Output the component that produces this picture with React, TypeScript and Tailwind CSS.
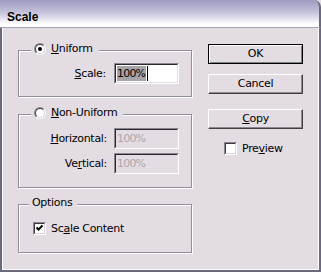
import React from 'react';

const Radio = ({ checked }: { checked?: boolean }) => (
  <div className="w-[12px] h-[12px] rounded-full border border-t-[#8a8790] border-l-[#8a8790] border-b-white border-r-white">
    <div className="w-full h-full rounded-full border border-t-[#3c3a40] border-l-[#3c3a40] border-b-[#d8d2d8] border-r-[#d8d2d8] bg-white flex items-center justify-center">
      {checked && <div className="w-[4px] h-[4px] rounded-full bg-black" />}
    </div>
  </div>
);

const Checkbox = ({ checked }: { checked?: boolean }) => (
  <div className="w-[13px] h-[13px] border border-t-[#8a8790] border-l-[#8a8790] border-b-white border-r-white">
    <div className="w-full h-full border border-t-[#3c3a40] border-l-[#3c3a40] border-b-[#d8d2d8] border-r-[#d8d2d8] bg-white">
      {checked && (
        <svg width="9" height="9" viewBox="0 0 9 9" className="block">
          <path d="M1.5 3.5 L3.5 5.5 L7.5 1.5" stroke="#000" strokeWidth="2" fill="none" />
        </svg>
      )}
    </div>
  </div>
);

const Field = ({ disabled, selected }: { disabled?: boolean; selected?: boolean }) => (
  <div className="w-[65px] h-[21px] border border-t-[#8a8790] border-l-[#8a8790] border-b-white border-r-white">
    <div
      className={`w-full h-full border border-t-[#2a282e] border-l-[#2a282e] border-b-[#e3dde3] border-r-[#e3dde3] flex items-center pl-[1px] ${
        disabled ? 'bg-[#e3dde3] text-[#a9a5ab]' : 'bg-white text-black'
      }`}
    >
      {selected ? (
        <>
          <span className="bg-[#a6a4a8] leading-[15px] tracking-[-0.8px] pr-[1px]">100%</span>
          <span className="w-[1px] h-[15px] bg-black ml-[1px]" />
        </>
      ) : (
        <span className="leading-[15px] tracking-[-0.8px]">100%</span>
      )}
    </div>
  </div>
);

const Group = ({
  legend,
  legendLeft,
  className,
  children,
}: {
  legend: React.ReactNode;
  legendLeft: string;
  className: string;
  children?: React.ReactNode;
}) => (
  <div
    className={`relative w-[174px] border border-[#918d99] shadow-[inset_1px_1px_0_#ffffff,1px_1px_0_#ffffff] ${className}`}
  >
    <div className={`absolute top-[-8px] ${legendLeft} h-[12px] flex items-center bg-[#e3dde3]`}>{legend}</div>
    {children}
  </div>
);

const Button = ({ children, isDefault }: { children: React.ReactNode; isDefault?: boolean }) => (
  <div
    className={`w-[95px] h-[20px] flex items-center justify-center ${
      isDefault
        ? 'border border-black shadow-[inset_1px_1px_0_#ffffff,inset_-1px_-1px_0_#808080]'
        : 'border border-t-white border-l-white border-b-[#404040] border-r-[#404040] shadow-[inset_-1px_-1px_0_#8a8790]'
    }`}
  >
    <span className="leading-[12px]">{children}</span>
  </div>
);

export default function App() {
  return (
    <div className="w-[321px] h-[272px] flex flex-col bg-[#e3dde3] text-[11px] tracking-[-0.3px] text-black font-['DejaVu_Sans',sans-serif]">
      {/* title bar */}
      <div className="h-[28px] shrink-0 rounded-tr-[7px] border-r-2 border-b border-r-[#6b697d] border-b-[#a9a5b5] bg-[linear-gradient(to_bottom,#9e9ac0,#c4c1da_45%,#ffffff_90%)] px-[7px] pt-[10px]">
        <span className="font-['Liberation_Sans',sans-serif] font-bold text-[12px] leading-[12px] tracking-normal">
          Scale
        </span>
      </div>

      {/* body */}
      <div className="flex-1 border-x-2 border-b-2 border-[#6b697d]">
        <div className="h-full border-x border-b border-white flex pl-[15px]">
          {/* left column */}
          <div className="pt-[22px] flex flex-col">
            <Group
              className="h-[47px]"
              legendLeft="left-[12px] pl-[3px] pr-[6px]"
              legend={
                <>
                  <Radio checked />
                  <span className="ml-[5px] leading-[12px]">
                    <u>U</u>niform
                  </span>
                </>
              }
            >
              <div className="flex items-center justify-end pr-[12px] pt-[12px] gap-[8px]">
                <span className="leading-[12px]">
                  <u>S</u>cale:
                </span>
                <Field selected />
              </div>
            </Group>

            <Group
              className="h-[74px] mt-[17px]"
              legendLeft="left-[12px] pl-[3px] pr-[6px]"
              legend={
                <>
                  <Radio />
                  <span className="ml-[5px] leading-[12px]">
                    <u>N</u>on-Uniform
                  </span>
                </>
              }
            >
              <div className="flex flex-col items-end pr-[12px] pt-[13px] gap-[4px]">
                <div className="flex items-center gap-[7px]">
                  <span className="leading-[12px]">
                    <u>H</u>orizontal:
                  </span>
                  <Field disabled />
                </div>
                <div className="flex items-center gap-[7px]">
                  <span className="leading-[12px]">
                    Ve<u>r</u>tical:
                  </span>
                  <Field disabled />
                </div>
              </div>
            </Group>

            <Group
              className="h-[49px] mt-[16px]"
              legendLeft="left-[10px] pl-[3px] pr-[5px]"
              legend={<span className="leading-[12px]">Options</span>}
            >
              <div className="flex items-center pl-[14px] pt-[17px]">
                <Checkbox checked />
                <span className="ml-[5px] leading-[12px]">
                  Sc<u>a</u>le Content
                </span>
              </div>
            </Group>
          </div>

          {/* right column */}
          <div className="ml-[16px] pt-[16px] flex flex-col">
            <Button isDefault>OK</Button>
            <div className="mt-[10px]">
              <Button>Cancel</Button>
            </div>
            <div className="mt-[15px]">
              <Button>
                <u>C</u>opy
              </Button>
            </div>
            <div className="mt-[13px] pl-[16px] flex items-center">
              <Checkbox />
              <span className="ml-[5px] leading-[12px]">
                Pre<u>v</u>iew
              </span>
            </div>
          </div>
        </div>
      </div>
    </div>
  );
}
